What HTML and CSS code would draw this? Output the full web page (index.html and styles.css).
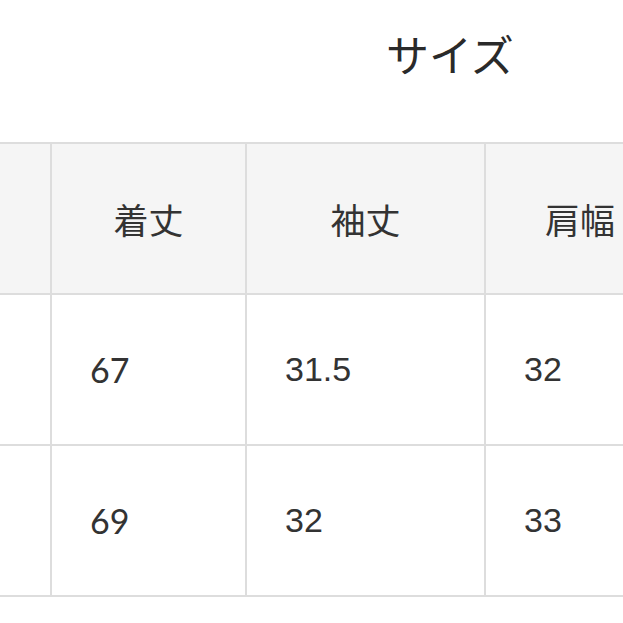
FILE: index.html
```html
<!DOCTYPE html>
<html lang="ja">
<head>
<meta charset="utf-8">
<link rel="stylesheet" href="styles.css">
</head>
<body>
<div class="page">
  <h1 class="title">サイズ</h1>
  <table class="size-table">
    <thead>
      <tr>
        <th class="c1"></th>
        <th class="c2">着丈</th>
        <th class="c3">袖丈</th>
        <th class="c4">肩幅</th>
      </tr>
    </thead>
    <tbody>
      <tr>
        <td class="c1"></td>
        <td class="c2 lato">67</td>
        <td class="c3">31.5</td>
        <td class="c4">32</td>
      </tr>
      <tr>
        <td class="c1"></td>
        <td class="c2 lato">69</td>
        <td class="c3">32</td>
        <td class="c4">33</td>
      </tr>
    </tbody>
  </table>
</div>
</body>
</html>
```

FILE: styles.css
```css
html, body {
  margin: 0;
  padding: 0;
  background: #ffffff;
}
.page {
  width: 623px;
  height: 623px;
  overflow: hidden;
}
.title {
  margin: 0;
  height: 142px;
  box-sizing: border-box;
  padding: 21px 0 0 386px;
  font-family: "Noto Sans CJK JP", "Noto Sans", sans-serif;
  font-weight: 400;
  font-size: 43px;
  line-height: 64px;
  color: #2a2a2a;
}
.size-table {
  border-collapse: collapse;
  table-layout: fixed;
  width: 668px;
  color: #333333;
}
.size-table th,
.size-table td {
  border: 2px solid #dddddd;
  height: 149px;
  padding: 0;
  vertical-align: middle;
}
.size-table th {
  background: #f5f5f5;
  font-family: "Noto Sans CJK JP", sans-serif;
  font-weight: 400;
  font-size: 35px;
  text-align: center;
}
.size-table td {
  font-family: "Liberation Sans", Arial, sans-serif;
  font-size: 34px;
  text-align: left;
  padding-left: 38px;
}
.size-table td.lato {
  font-family: Lato, "Liberation Sans", sans-serif;
}
.size-table td.c1 {
  padding-left: 0;
}
.c1 { width: 50px; }
.c2 { width: 193px; }
.c3 { width: 237px; }
.c4 { width: 188px; }
.size-table th.c1, .size-table td.c1 { border-left: none; }
```
